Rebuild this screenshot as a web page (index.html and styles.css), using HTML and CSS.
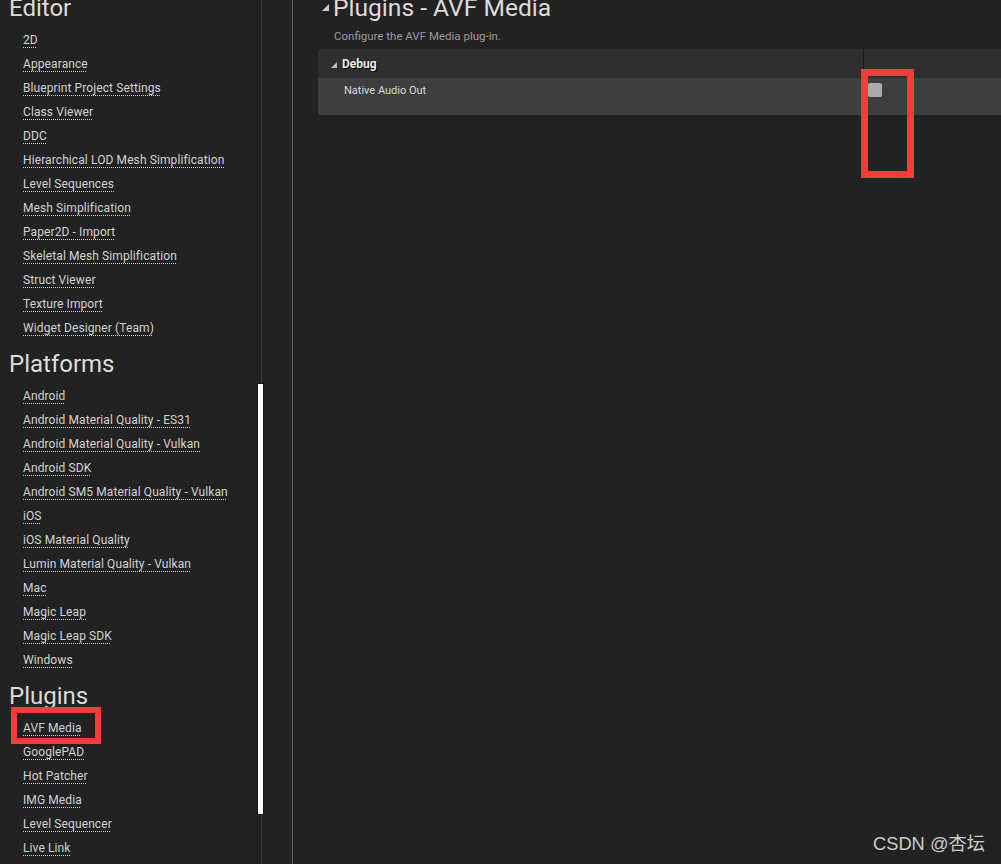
FILE: index.html
```html
<!DOCTYPE html>
<html>
<head>
<meta charset="utf-8">
<link rel="stylesheet" href="styles.css">
</head>
<body>
<div class="app">
  <aside class="sidebar">
    <nav class="cats">
      <h2 class="cat-title">Editor</h2>
      <ul class="cat-list">
        <li><a>2D</a></li>
        <li><a>Appearance</a></li>
        <li><a>Blueprint Project Settings</a></li>
        <li><a>Class Viewer</a></li>
        <li><a>DDC</a></li>
        <li><a>Hierarchical LOD Mesh Simplification</a></li>
        <li><a>Level Sequences</a></li>
        <li><a>Mesh Simplification</a></li>
        <li><a>Paper2D - Import</a></li>
        <li><a>Skeletal Mesh Simplification</a></li>
        <li><a>Struct Viewer</a></li>
        <li><a>Texture Import</a></li>
        <li><a>Widget Designer (Team)</a></li>
      </ul>
      <h2 class="cat-title">Platforms</h2>
      <ul class="cat-list">
        <li><a>Android</a></li>
        <li><a>Android Material Quality - ES31</a></li>
        <li><a>Android Material Quality - Vulkan</a></li>
        <li><a>Android SDK</a></li>
        <li><a>Android SM5 Material Quality - Vulkan</a></li>
        <li><a>iOS</a></li>
        <li><a>iOS Material Quality</a></li>
        <li><a>Lumin Material Quality - Vulkan</a></li>
        <li><a>Mac</a></li>
        <li><a>Magic Leap</a></li>
        <li><a>Magic Leap SDK</a></li>
        <li><a>Windows</a></li>
      </ul>
      <h2 class="cat-title">Plugins</h2>
      <ul class="cat-list">
        <li><a>AVF Media</a></li>
        <li><a>GooglePAD</a></li>
        <li><a>Hot Patcher</a></li>
        <li><a>IMG Media</a></li>
        <li><a>Level Sequencer</a></li>
        <li><a>Live Link</a></li>
      </ul>
    </nav>
    <div class="scroll"><div class="thumb"></div></div>
  </aside>
  <div class="divider"></div>
  <main class="main">
    <div class="title-row">
      <span class="tri tri-title"></span>
      <h1 class="title">Plugins - AVF Media</h1>
    </div>
    <p class="subtitle">Configure the AVF Media plug-in.</p>
    <section class="group">
      <div class="group-head">
        <div class="group-name"><span class="tri tri-small"></span><span class="group-label">Debug</span></div>
        <div class="group-value"></div>
      </div>
      <div class="prop-row">
        <div class="prop-name">Native Audio Out</div>
        <div class="prop-value"><span class="checkbox"></span></div>
      </div>
    </section>
  </main>
</div>
<div class="mark mark-left"></div>
<div class="mark mark-right"></div>
<div class="watermark">CSDN @杏坛</div>
</body>
</html>
```

FILE: styles.css
```css
html, body {
  margin: 0;
  padding: 0;
  background: #222222;
  font-family: Roboto, "Noto Sans", sans-serif;
  overflow: hidden;
}

.app {
  display: flex;
  width: 1001px;
  height: 864px;
  overflow: hidden;
  background: #222222;
}

.sidebar {
  display: flex;
  width: 264px;
  flex: none;
}

.cats {
  width: 257px;
  margin-top: -16px;
  padding-left: 9px;
  box-sizing: border-box;
}

.cat-title {
  margin: 8px 0 4px 0;
  font-size: 24px;
  line-height: 32px;
  font-weight: 400;
  color: #dcdcdc;
}

.cat-list {
  list-style: none;
  margin: 0;
  padding: 0 0 0 14px;
}

.cat-list li {
  height: 24px;
  line-height: 24px;
  font-size: 12px;
  letter-spacing: 0.1px;
  color: #d2d2d2;
  white-space: nowrap;
}

.cat-list a {
  text-decoration: underline dotted #cfcfcf;
  text-underline-offset: 3px;
  text-decoration-thickness: 1px;
}

.scroll {
  width: 7px;
  flex: none;
  background: linear-gradient(to right, transparent 4px, #3a3a3a 4px, #3a3a3a 5px, transparent 5px);
}

.thumb {
  margin-top: 383px;
  height: 432px;
  background: #ffffff;
  border: 1px solid #151515;
  box-sizing: border-box;
}

.divider {
  width: 1px;
  margin-left: 28px;
  background: #626262;
  flex: none;
}

.main {
  flex: 1;
  padding-left: 25px;
  margin-top: -16px;
}

.title-row {
  display: flex;
  align-items: center;
  height: 32px;
  margin-top: 8px;
  padding-left: 4px;
}

.tri {
  display: inline-block;
  width: 0;
  height: 0;
  border-style: solid;
  border-color: transparent;
}

.tri-title {
  border-width: 0 0 7px 7px;
  border-bottom-color: #cfcfcf;
  margin-right: 4px;
  margin-top: -2px;
}

.title {
  margin: 0;
  font-size: 24.6px;
  line-height: 32px;
  font-weight: 400;
  color: #dcdcdc;
}

.subtitle {
  margin: 4px 0 0 16px;
  font-size: 11.5px;
  line-height: 16px;
  color: #9a9a9a;
}

.group {
  margin-top: 5px;
  margin-right: -2px;
}

.group-head {
  display: flex;
  height: 29px;
  background: #2f2f2f;
  border-radius: 3px 0 0 0;
}

.group-name {
  width: 532px;
  display: flex;
  align-items: center;
  padding-left: 13px;
  border-right: 1px solid #181818;
}

.tri-small {
  border-width: 0 0 6px 6px;
  border-bottom-color: #bdbdbd;
  margin-right: 5px;
  margin-top: 2px;
}

.group-label {
  font-size: 12px;
  font-weight: 700;
  color: #ececec;
  text-shadow: 1px 1px 0 #000;
}

.group-value {
  flex: 1;
}

.prop-row {
  display: flex;
  height: 37px;
  background: #3e3e3e;
  border-radius: 0 0 0 3px;
}

.prop-name {
  width: 519px;
  padding-left: 26px;
  padding-top: 6px;
  font-size: 11px;
  line-height: 14px;
  color: #dadada;
}

.prop-value {
  padding-top: 5px;
  padding-left: 5px;
}

.checkbox {
  display: block;
  width: 14px;
  height: 14px;
  background: #acacac;
  border-radius: 2px;
}

.mark {
  position: absolute;
  border: 6px solid #fc3a3a;
  box-sizing: border-box;
}

.mark-left {
  left: 11px;
  top: 707px;
  width: 90px;
  height: 37px;
}

.mark-right {
  left: 861px;
  top: 69px;
  width: 53px;
  height: 109px;
  border-width: 7px;
}

.watermark {
  position: absolute;
  right: 16px;
  bottom: 8px;
  font-family: "Liberation Sans", "Noto Sans CJK SC", sans-serif;
  font-size: 18.3px;
  line-height: 24px;
  color: #cccccc;
}
```
